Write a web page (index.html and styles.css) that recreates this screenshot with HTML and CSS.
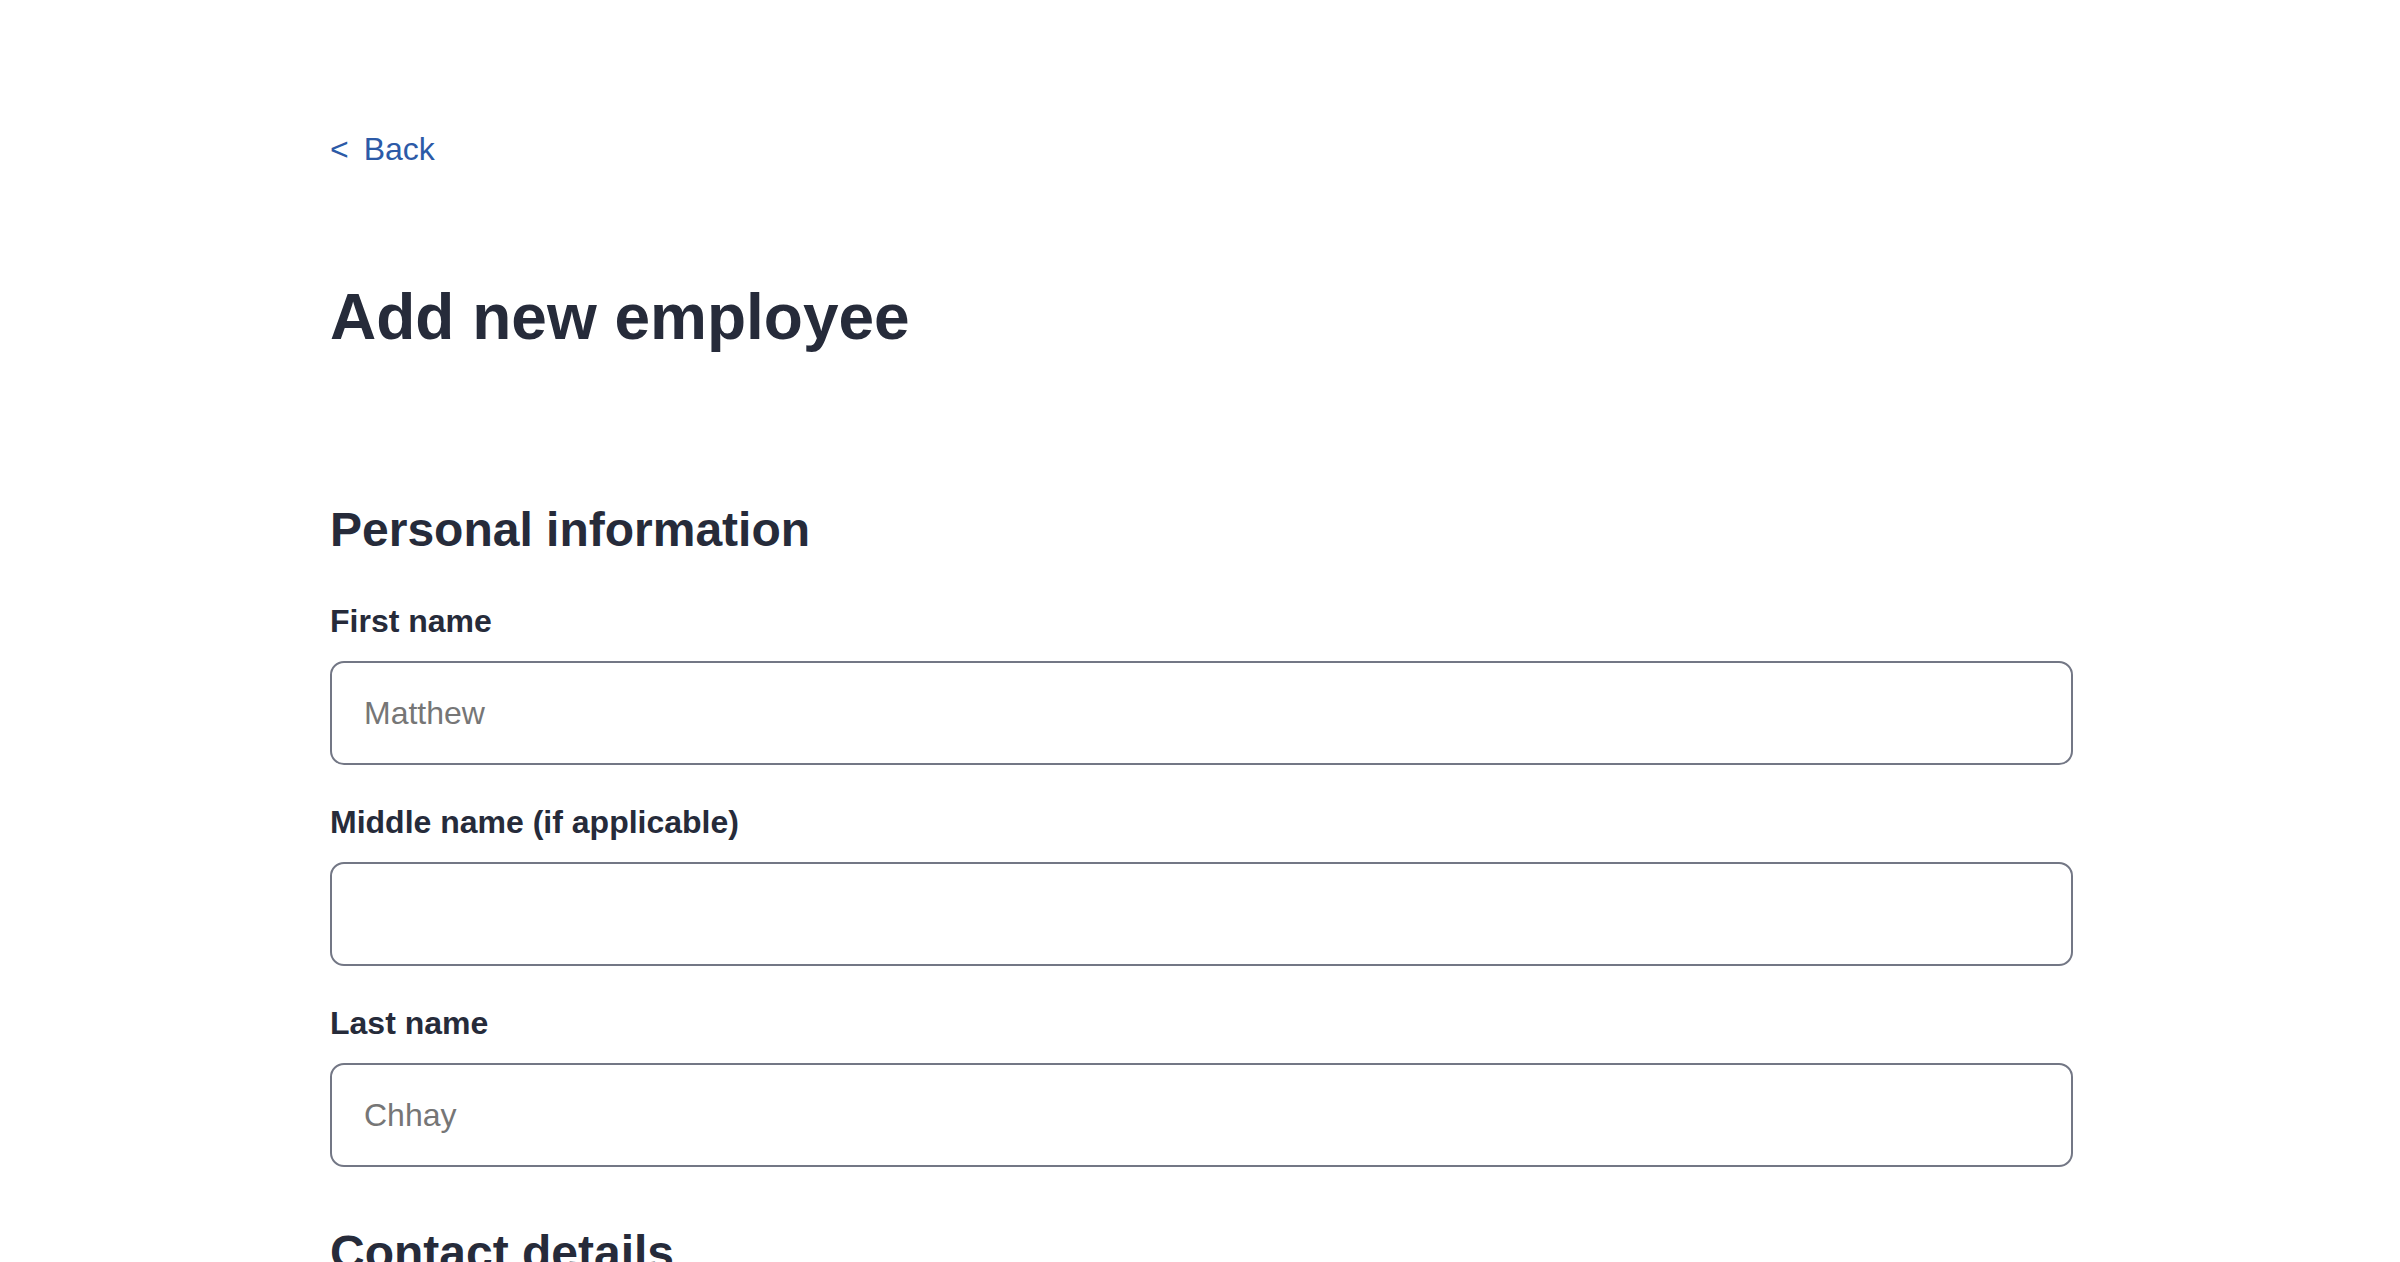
FILE: index.html
```html
<!DOCTYPE html>
<html lang="en">
<head>
<meta charset="utf-8">
<title>Add new employee</title>
<link rel="stylesheet" href="styles.css">
</head>
<body>
<main class="page">
  <a class="back" href="#"><span class="back-icon">&lt;</span><span>Back</span></a>
  <h1 class="title">Add new employee</h1>
  <section class="section">
    <h2 class="section-title">Personal information</h2>
    <div class="field">
      <label class="label" for="first">First name</label>
      <input class="input" id="first" type="text" placeholder="Matthew">
    </div>
    <div class="field">
      <label class="label" for="middle">Middle name (if applicable)</label>
      <input class="input" id="middle" type="text">
    </div>
    <div class="field">
      <label class="label" for="last">Last name</label>
      <input class="input" id="last" type="text" placeholder="Chhay">
    </div>
  </section>
  <section class="section section-next">
    <h2 class="section-title">Contact details</h2>
  </section>
</main>
</body>
</html>
```
FILE: styles.css
```css
html, body {
  margin: 0;
  padding: 0;
  background: #ffffff;
}
body {
  font-family: "Liberation Sans", Arial, Helvetica, sans-serif;
  color: #262b3a;
  overflow: hidden;
}
.page {
  width: 1742px;
  padding: 125px 0 0 330px;
  display: flex;
  flex-direction: column;
}
.back {
  display: flex;
  align-items: center;
  gap: 15px;
  font-size: 32px;
  line-height: 48px;
  height: 48px;
  color: #2c5aa7;
  text-decoration: none;
  align-self: flex-start;
}
.title {
  margin: 106px 0 0 0;
  font-size: 64px;
  line-height: 77px;
  font-weight: 700;
  color: #262b3a;
}
.section {
  display: flex;
  flex-direction: column;
  margin-top: 145px;
}
.section-next {
  margin-top: 24px;
}
.section-title {
  margin: 0 0 38px 0;
  font-size: 48px;
  line-height: 58px;
  font-weight: 700;
  color: #262b3a;
}
.field {
  display: flex;
  flex-direction: column;
  margin-bottom: 33px;
}
.label {
  font-size: 32px;
  line-height: 48px;
  font-weight: 700;
  color: #262b3a;
  margin-bottom: 16px;
}
.input {
  box-sizing: border-box;
  width: 1743px;
  height: 104px;
  border: 2px solid #737785;
  border-radius: 14px;
  padding: 0 32px;
  font-family: "Liberation Sans", Arial, Helvetica, sans-serif;
  font-size: 32px;
  color: #262b3a;
  background: #ffffff;
  outline: none;
}
.input::placeholder {
  color: #767676;
  opacity: 1;
}
```
